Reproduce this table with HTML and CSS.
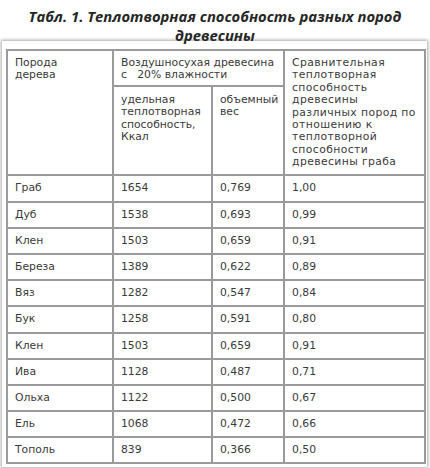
FILE: index.html
```html
<!DOCTYPE html>
<html lang="ru">
<head>
<meta charset="utf-8">
<link rel="stylesheet" href="styles.css">
</head>
<body>
<h1 class="title">Табл. 1. Теплотворная способность разных пород<br>древесины</h1>
<div class="panel">
<table class="grid">
<colgroup>
<col class="c1"><col class="c2"><col class="c3"><col class="c4">
</colgroup>
<tr class="h1">
<td rowspan="2">Порода<br>дерева</td>
<td colspan="2">Воздушносухая древесина<br>с&nbsp;&nbsp;&nbsp;20% влажности</td>
<td rowspan="2" class="wide">Сравнительная<br>теплотворная<br>способность<br>древесины<br>различных пород по<br>отношению к<br>теплотворной<br>способности<br>древесины граба</td>
</tr>
<tr class="h2">
<td>удельная<br>теплотворная<br>способность,<br>Ккал</td>
<td>объемный<br>вес</td>
</tr>
<tr class="tall"><td>Граб</td><td>1654</td><td>0,769</td><td>1,00</td></tr>
<tr><td>Дуб</td><td>1538</td><td>0,693</td><td>0,99</td></tr>
<tr><td>Клен</td><td>1503</td><td>0,659</td><td>0,91</td></tr>
<tr><td>Береза</td><td>1389</td><td>0,622</td><td>0,89</td></tr>
<tr><td>Вяз</td><td>1282</td><td>0,547</td><td>0,84</td></tr>
<tr class="tall"><td>Бук</td><td>1258</td><td>0,591</td><td>0,80</td></tr>
<tr><td>Клен</td><td>1503</td><td>0,659</td><td>0,91</td></tr>
<tr><td>Ива</td><td>1128</td><td>0,487</td><td>0,71</td></tr>
<tr><td>Ольха</td><td>1122</td><td>0,500</td><td>0,67</td></tr>
<tr><td>Ель</td><td>1068</td><td>0,472</td><td>0,66</td></tr>
<tr><td>Тополь</td><td>839</td><td>0,366</td><td>0,50</td></tr>
</table>
</div>
</body>
</html>
```
FILE: styles.css
```css
html, body {
  margin: 0;
  padding: 0;
  background: #ffffff;
}
body {
  width: 430px;
  height: 468px;
  overflow: hidden;
}
.title {
  margin: 0;
  padding-top: 7px;
  height: 34px;
  text-align: center;
  font-family: "Open Sans", "DejaVu Sans", sans-serif;
  font-style: italic;
  font-weight: 700;
  font-size: 14.8px;
  line-height: 19px;
  color: #262626;
}
.panel {
  margin: 0 3px 0 2px;
  padding: 8px 3px 3px 4px;
  background: #fff;
  box-shadow: 0 0 3px 1px rgba(0,0,0,0.35);
}
.grid {
  width: 418px;
  table-layout: fixed;
  border-collapse: collapse;
  border: 2px solid #8c8c8c;
  font-family: "DejaVu Sans", "Liberation Sans", sans-serif;
  font-size: 10.8px;
  line-height: 12.4px;
  color: #3a3a3a;
}
.c1 { width: 106px; }
.c2 { width: 99px; }
.c3 { width: 72px; }
.c4 { width: 141px; }
.grid td {
  border: 2px solid #9a9a9a;
  padding: 0 0 0 7px;
  height: 24px;
  vertical-align: middle;
  white-space: nowrap;
  overflow: hidden;
}
.grid .tall td { height: 25px; }
.grid .h1 td, .grid .h2 td {
  vertical-align: top;
  padding-top: 6px;
}
.grid .h1 td[colspan] { height: 28px; }
.grid .h2 td { height: 80px; padding-top: 7px; }
.grid .wide { letter-spacing: 0.4px; }
```
